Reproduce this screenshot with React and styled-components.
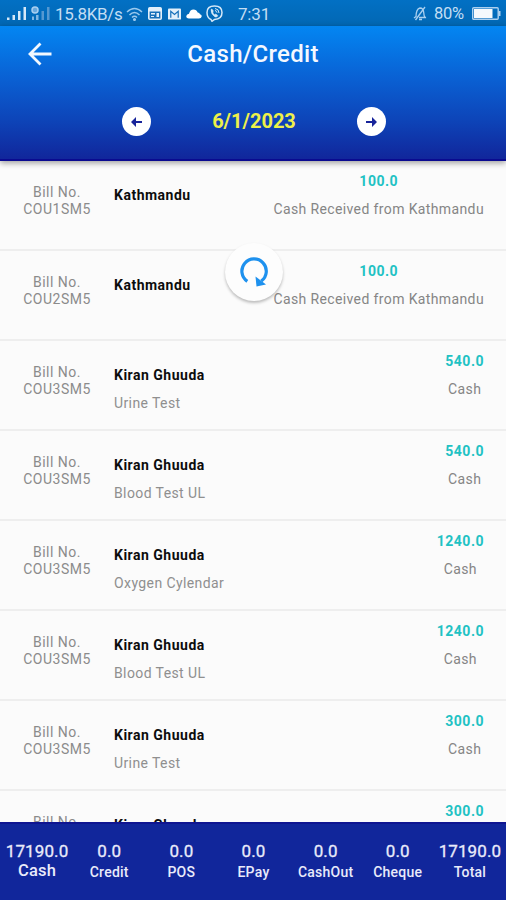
import React from "react";
import styled, { createGlobalStyle } from "styled-components";

const GlobalStyle = createGlobalStyle`
  * { box-sizing: border-box; }
  body { margin: 0; background: #fbfbfb; font-family: Roboto, sans-serif; overflow: hidden; }
`;

const Screen = styled.div`
  width: 506px;
  height: 900px;
  display: flex;
  flex-direction: column;
  overflow: hidden;
  background: #fbfbfb;
`;

const StatusBar = styled.div`
  height: 26px;
  flex: none;
  display: flex;
  align-items: center;
  padding: 1px 6px 0 7px;
  background: linear-gradient(#0270c4, #0267b3);
  color: #c3def4;
  svg { display: block; flex: none; }
`;

const StatusText = styled.span`
  flex: none;
  width: ${(p) => p.$width}px;
  font-size: ${(p) => p.$size || 17}px;
  line-height: 24px;
  letter-spacing: ${(p) => p.$spacing || 0}px;
  margin-left: ${(p) => p.$left || 0}px;
  white-space: nowrap;
`;

const StatusIcon = styled.svg`
  margin-left: ${(p) => p.$left || 0}px;
`;

const Header = styled.header`
  position: relative;
  z-index: 1;
  height: 135px;
  flex: none;
  background: linear-gradient(#0386f2 0%, #0a5fd2 41%, #0d45b9 70%, #11269b 100%);
  border-bottom: 2px solid #0a0a90;
  box-shadow: 0 2px 6px rgba(0, 0, 0, 0.38);
`;

const TitleRow = styled.div`
  height: 55px;
  display: grid;
  grid-template-columns: 80px 1fr 80px;
  align-items: center;
  svg { display: block; margin-left: 28px; }
`;

const Title = styled.h1`
  margin: 0;
  text-align: center;
  font-size: 24px;
  line-height: 28px;
  font-weight: 500;
  letter-spacing: 0.3px;
  color: #f4f8ff;
`;

const DateRow = styled.div`
  margin-top: 26px;
  height: 29px;
  display: grid;
  grid-template-columns: 29px 1fr 29px;
  align-items: center;
  padding: 0 120px 0 122px;
`;

const DateLabel = styled.div`
  margin-top: -1px;
  text-align: center;
  font-size: 20px;
  line-height: 28px;
  font-weight: 700;
  color: #edf04a;
`;

const RoundButton = styled.button`
  width: 29px;
  height: 29px;
  padding: 0;
  border: 0;
  border-radius: 50%;
  background: #fff;
  display: grid;
  place-items: center;
`;

const List = styled.main`
  flex: 1;
  min-height: 0;
  overflow: hidden;
`;

const Row = styled.div`
  height: 90px;
  display: grid;
  grid-template-columns: 114px 1fr auto;
  border-bottom: 2px solid #eeeeee;
  padding-right: 22px;
`;

const Bill = styled.div`
  padding-top: 23px;
  text-align: center;
  font-size: 14px;
  line-height: 17px;
  letter-spacing: 0.5px;
  color: #8b8b8b;
`;

const Party = styled.div`
  padding-top: 25px;
`;

const Name = styled.div`
  font-size: 14px;
  line-height: 18px;
  font-weight: 700;
  letter-spacing: 0.5px;
  color: #0c0c0c;
`;

const Note = styled.div`
  margin-top: 10px;
  font-size: 14px;
  line-height: 18px;
  letter-spacing: 0.4px;
  color: #8f8f8f;
`;

const Payment = styled.div`
  padding-top: 11px;
  text-align: center;
`;

const Amount = styled.div`
  font-size: 14px;
  line-height: 18px;
  font-weight: 700;
  letter-spacing: 0.5px;
  color: #1fc2c4;
`;

const Method = styled.div`
  margin-top: 10px;
  font-size: 14px;
  line-height: 18px;
  letter-spacing: 0.38px;
  color: #858585;
`;

const Refresh = styled.div`
  position: absolute;
  z-index: 2;
  left: 225px;
  top: 243px;
  width: 58px;
  height: 58px;
  border-radius: 50%;
  background: #fdfdfd;
  box-shadow: 0 2px 3px rgba(0, 0, 0, 0.25);
  display: grid;
  place-items: center;
`;

const Footer = styled.footer`
  position: relative;
  z-index: 1;
  height: 78px;
  flex: none;
  display: grid;
  grid-template-columns: repeat(7, 1fr);
  background: #11269b;
  border-top: 2px solid #0f1591;
  padding: 17px 0 0 1px;
`;

const Total = styled.div`
  display: flex;
  flex-direction: column;
  align-items: center;
  color: #e9ebfa;
  font-weight: 500;
  white-space: nowrap;
`;

const TotalValue = styled.div`
  font-size: 17px;
  line-height: 20px;
  letter-spacing: 0.1px;
  font-weight: 400;
  -webkit-text-stroke: 0.3px currentColor;
`;

const TotalLabel = styled.div`
  font-size: ${(p) => (p.$large ? 16.5 : 14)}px;
  line-height: ${(p) => (p.$large ? 19 : 22)}px;
  letter-spacing: 0.25px;
`;

const rows = [
  ["COU1SM5", "Kathmandu", "", "100.0", "Cash Received from Kathmandu"],
  ["COU2SM5", "Kathmandu", "", "100.0", "Cash Received from Kathmandu"],
  ["COU3SM5", "Kiran Ghuuda", "Urine Test", "540.0", "Cash"],
  ["COU3SM5", "Kiran Ghuuda", "Blood Test UL", "540.0", "Cash"],
  ["COU3SM5", "Kiran Ghuuda", "Oxygen Cylendar", "1240.0", "Cash"],
  ["COU3SM5", "Kiran Ghuuda", "Blood Test UL", "1240.0", "Cash"],
  ["COU3SM5", "Kiran Ghuuda", "Urine Test", "300.0", "Cash"],
  ["COU3SM5", "Kiran Ghuuda", "", "300.0", ""],
];

const totals = [
  ["17190.0", "Cash"],
  ["0.0", "Credit"],
  ["0.0", "POS"],
  ["0.0", "EPay"],
  ["0.0", "CashOut"],
  ["0.0", "Cheque"],
  ["17190.0", "Total"],
];

const SmallArrow = ({ flip }) => (
  <svg width="11" height="10" viewBox="0 0 11 10">
    <path
      d={flip ? "M0 3.900H6V0L11 5L6 10V6.100H0Z" : "M11 3.900H5V0L0 5L5 10V6.100H11Z"}
      fill="#18249a"
    />
  </svg>
);

export default function App() {
  return (
    <Screen>
      <GlobalStyle />
      <StatusBar>
        <svg width="20" height="15" viewBox="0 0 20 15" fill="#d5e8f8">
          <path d="M0 11.500h2.500V14H0zM5.500 9H8v5H5.500zM11 5h2.500v9H11zM16.500 1H19v13h-2.500z" />
        </svg>
        <StatusIcon $left={4} width="19" height="15" viewBox="0 0 19 15">
          <circle cx="4" cy="4" r="3" fill="#68a8dd" stroke="#a9cff0" strokeWidth="1.500" />
          <path d="M1 10.500h2V14H1zM5 9h2.500v5H5z" fill="#7eb5e2" />
          <path d="M10.500 5H13v9h-2.500zM16 1h2.500v13H16z" fill="#5598d1" />
        </StatusIcon>
        <StatusText $left={5} $size={17} $width={67} $spacing={-0.35}>15.8KB/s</StatusText>
        <StatusIcon $left={4} width="17" height="14" viewBox="0 0 17 14" fill="none" stroke="#9bc9ee" strokeWidth="1.500">
          <path d="M1 5Q8.500-2 16 5M3.500 8Q8.500 3 13.500 8M6 10.500Q8.500 8 11 10.500" />
          <circle cx="8.500" cy="12.500" r=".8" fill="#d5e8f8" />
        </StatusIcon>
        <StatusIcon $left={5} width="14" height="13" viewBox="0 0 14 13">
          <rect x=".8" y=".8" width="12.400" height="11.400" rx="1" fill="#1670b9" stroke="#e2effa" strokeWidth="1.600" />
          <path d="M1 1h12v3.500H1zM3 6h4v1.500H3zM3 9h3v1H3zM8.500 6H11v4H8.500z" fill="#e2effa" />
        </StatusIcon>
        <StatusIcon $left={6} width="13" height="12" viewBox="0 0 14 12">
          <rect width="14" height="12" rx="1" fill="#e2effa" />
          <path d="M3 10V3l4 3.500L11 3v7" fill="none" stroke="#1670b9" strokeWidth="1.300" />
        </StatusIcon>
        <StatusIcon $left={5} width="16" height="10" viewBox="0 0 16 10" fill="#fff">
          <path d="M3 9.500Q0 9.200 .3 7Q.8 5 3 4.800Q4 .5 7.500 .5Q10.500 .5 11.700 3.500Q13.500 3.500 14 5.200Q16 5.700 15.700 7.600Q15.300 9.500 13 9.500Z" />
        </StatusIcon>
        <StatusIcon $left={4} width="17" height="17" viewBox="0 0 17 17" fill="none" stroke="#d5e8f8" strokeWidth="1.500">
          <path d="M5 14.500Q1 13 1 7.500Q1 1 8.500 1T16 7.500T8.500 14.500L6 16.300Z" />
          <path d="M5 4.500Q4.500 8.500 9 12Q11.500 12.500 11.800 10.500L9.800 9L8.500 9.700Q7 8.500 6.800 7L7.400 6L5.900 4Z" fill="#d5e8f8" strokeWidth=".5" />
          <path d="M9 3.500Q13 4 13 8M9 5.500Q11 6 11 7.700" strokeWidth="1" />
        </StatusIcon>
        <StatusText $left={15} $size={17} $width={32} $spacing={-0.2}>7:31</StatusText>
        <StatusIcon $left={143} width="14" height="15" viewBox="0 0 14 15" fill="none" stroke="#a9cff0" strokeWidth="1.300">
          <path d="M3 11Q3 3 7 2Q10.500 2 10.800 7T13 11.500H6M1 12L3 10.500M2.500 14L12 1M6 13.500H9" />
        </StatusIcon>
        <StatusText $left={7} $size={16.5} $width={31} $spacing={-0.3}>80%</StatusText>
        <StatusIcon $left={7} width="29" height="13" viewBox="0 0 29 13">
          <rect x=".7" y=".7" width="25.500" height="11.600" rx="1" fill="none" stroke="#acd0ef" strokeWidth="1.400" />
          <path d="M2 2h18.500v9H2z" fill="#f5f9fd" />
          <path d="M26.500 4h2v5h-2z" fill="#acd0ef" />
        </StatusIcon>
      </StatusBar>
      <Header>
        <TitleRow>
          <svg width="24" height="24" viewBox="0 0 24 24" fill="none" stroke="#f2f8ff" strokeWidth="2.800">
            <path d="M23.500 12H2.500M12.500 1.500L2 12L12.500 22.500" />
          </svg>
          <Title>Cash/Credit</Title>
        </TitleRow>
        <DateRow>
          <RoundButton aria-label="Previous day"><SmallArrow /></RoundButton>
          <DateLabel>6/1/2023</DateLabel>
          <RoundButton aria-label="Next day"><SmallArrow flip /></RoundButton>
        </DateRow>
      </Header>
      <List>
        {rows.map(([bill, name, note, amount, method], i) => (
          <Row key={i}>
            <Bill>Bill No.<br />{i < 7 && bill}</Bill>
            <Party>
              <Name>{name}</Name>
              {note && <Note>{note}</Note>}
            </Party>
            <Payment>
              <Amount>{amount}</Amount>
              {method && <Method>{method}</Method>}
            </Payment>
          </Row>
        ))}
      </List>
      <Refresh>
        <svg width="32" height="32" viewBox="0 0 32 32">
          <path d="M9.300 25.300A12.200 12.200 0 1 1 23.300 25" fill="none" stroke="#1e91ee" strokeWidth="3.200" />
          <path d="M17.500 20.500L18.500 30.500L28 28.500Z" fill="#1e91ee" />
        </svg>
      </Refresh>
      <Footer>
        {totals.map(([value, label], i) => (
          <Total key={label}>
            <TotalValue>{value}</TotalValue>
            <TotalLabel $large={i === 0}>{label}</TotalLabel>
          </Total>
        ))}
      </Footer>
    </Screen>
  );
}
